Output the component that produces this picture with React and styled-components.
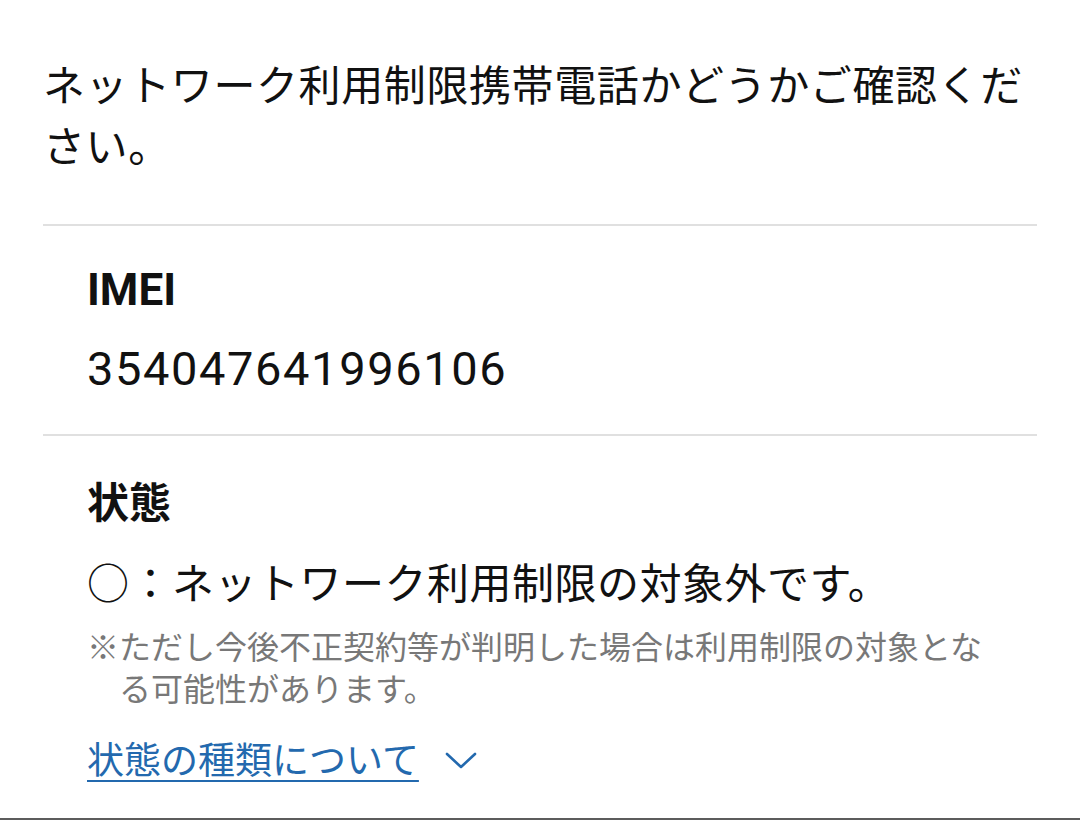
import React from 'react';
import styled, { createGlobalStyle } from 'styled-components';

const GlobalStyle = createGlobalStyle`
  html, body {
    margin: 0;
    padding: 0;
    background: #fff;
  }
  body {
    font-family: "Roboto", "Noto Sans CJK JP", sans-serif;
    color: #111;
  }
`;

const Page = styled.div`
  min-height: 820px;
  display: flex;
  flex-direction: column;
  box-sizing: border-box;
`;

const Content = styled.main`
  padding: 52px 43px 0;
`;

const Lead = styled.p`
  margin: 0 0 50px;
  font-family: "Noto Sans CJK JP", sans-serif;
  font-size: 42px;
  line-height: 61px;
  letter-spacing: 0.6px;
  color: #111;
`;

const Section = styled.section`
  border-top: 2px solid #e0e0e0;
  padding: ${(p) => p.$pad || '34px 0 35px 44px'};
`;

const Label = styled.h2`
  margin: 0;
  font-family: ${(p) => (p.$latin ? '"Roboto", sans-serif' : '"Noto Sans CJK JP", sans-serif')};
  font-size: ${(p) => (p.$latin ? '44px' : '42px')};
  font-weight: 700;
  line-height: 60px;
  color: #111;
`;

const Value = styled.div`
  margin-top: ${(p) => p.$gap || '19px'};
  font-family: ${(p) => (p.$latin ? '"Roboto", sans-serif' : '"Noto Sans CJK JP", sans-serif')};
  font-size: ${(p) => (p.$latin ? '47px' : '42px')};
  letter-spacing: ${(p) => (p.$latin ? '1.6px' : '0.5px')};
  line-height: 60px;
  color: #111;
`;

const Note = styled.p`
  margin: 13px 0 0;
  font-family: "Noto Sans CJK JP", sans-serif;
  font-size: 32px;
  line-height: 42px;
  color: #787878;
  padding-left: 1em;
  text-indent: -1em;
  max-width: 870px;
`;

const MoreRow = styled.div`
  margin-top: 25px;
  display: flex;
  align-items: center;
  gap: 26px;
  line-height: 50px;
`;

const MoreLink = styled.a`
  font-family: "Noto Sans CJK JP", sans-serif;
  font-size: 37px;
  color: #2369ae;
  text-decoration: underline;
  text-decoration-thickness: 2px;
  text-underline-offset: 6px;
  cursor: pointer;
`;

const Chevron = styled.svg`
  width: 32px;
  height: 18px;
  margin-top: 6px;
  flex: none;
`;

const BottomEdge = styled.div`
  margin-top: auto;
  height: 2px;
  background: #5c5c5c;
`;

export default function App() {
  return (
    <Page>
      <GlobalStyle />
      <Content>
        <Lead>ネットワーク利用制限携帯電話かどうかご確認ください。</Lead>

        <Section>
          <Label $latin>IMEI</Label>
          <Value $latin>354047641996106</Value>
        </Section>

        <Section $pad="34px 0 0 44px">
          <Label>状態</Label>
          <Value $gap="21px">○：ネットワーク利用制限の対象外です。</Value>
          <Note>※ただし今後不正契約等が判明した場合は利用制限の対象となる可能性があります。</Note>
          <MoreRow>
            <MoreLink>状態の種類について</MoreLink>
            <Chevron viewBox="0 0 32 18" fill="none">
              <path d="M2 2 L16 15 L30 2" stroke="#2369ae" strokeWidth="2.6" strokeLinecap="round" strokeLinejoin="round" />
            </Chevron>
          </MoreRow>
        </Section>
      </Content>
      <BottomEdge />
    </Page>
  );
}
